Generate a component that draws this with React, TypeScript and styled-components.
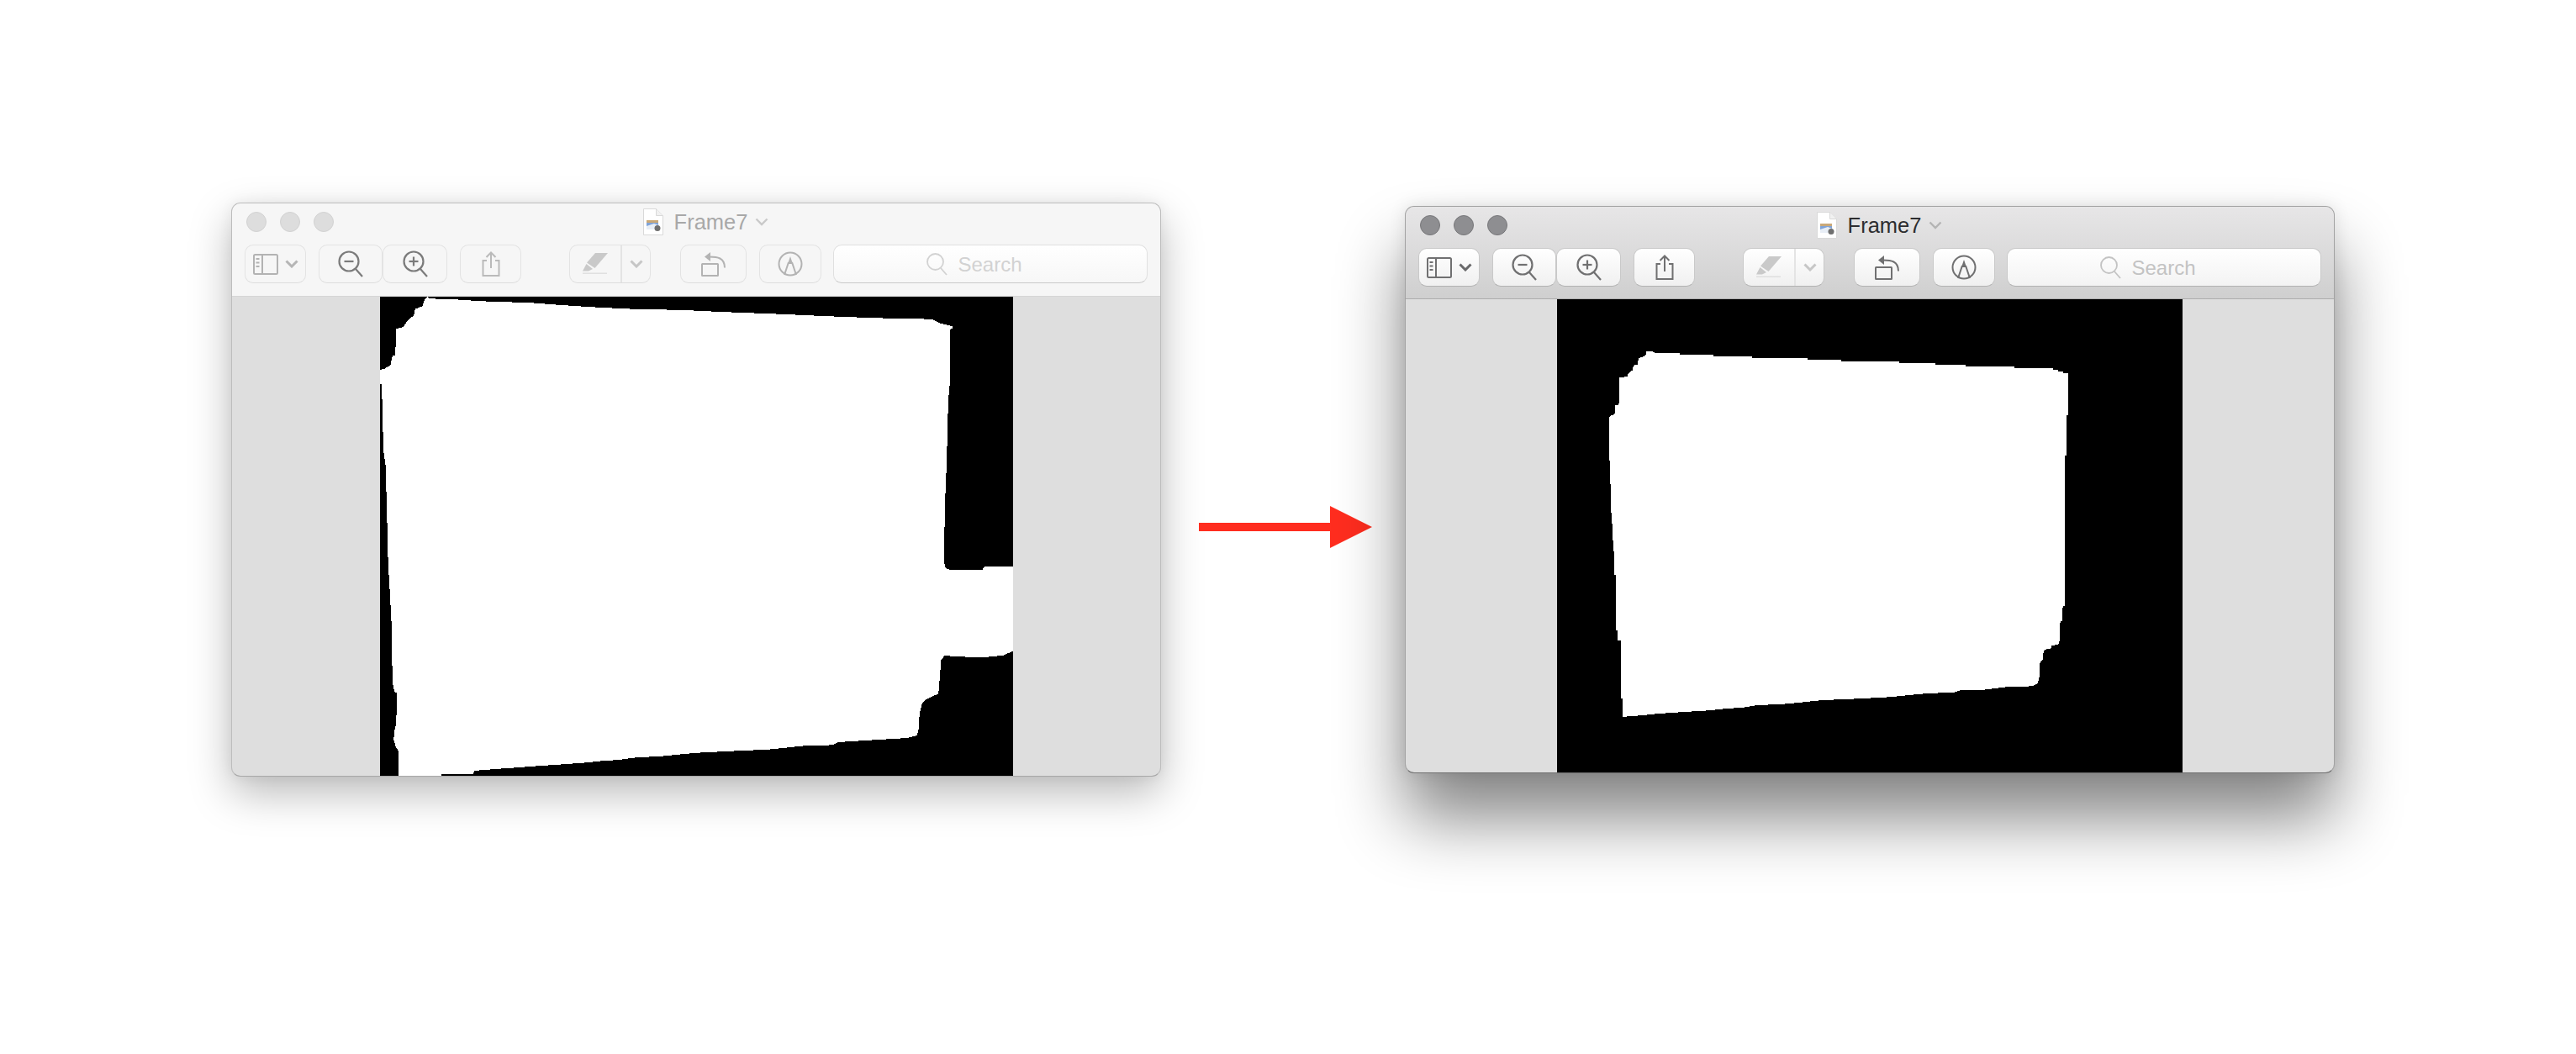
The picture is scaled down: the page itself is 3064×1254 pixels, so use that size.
import React from 'react';
import styled, { createGlobalStyle } from 'styled-components';

const GlobalStyle = createGlobalStyle`
  html, body {
    margin: 0;
    background: #ffffff;
  }
`;

// Mask outlines, read off the reference. Each list is in the coordinates of its viewBox.
const MASK_BEFORE =
  '152,30 155,36 210,38 278,44 392,49 452,55 530,62 620,68 752,72 830,77 968,84 1052,89 1122,93 1238,98 1328,100 1345,112 1375,122 1375,130 1371,130 1370,295 1366,352 1362,555 1358,685 1356,860 1360,878 1372,883 1445,883 1450,873 1517,873 1517,1136 1495,1150 1458,1155 1435,1157 1357,1151 1349,1165 1347,1205 1343,1270 1325,1280 1312,1290 1305,1300 1299,1330 1297,1378 1293,1400 1270,1408 1218,1412 1170,1416 1110,1421 1095,1430 1033,1432 990,1438 945,1444 875,1448 785,1454 748,1458 705,1464 630,1470 600,1476 555,1480 520,1485 458,1491 402,1496 365,1500 310,1505 262,1510 258,1520 185,1522 183,1526 85,1526 84,1448 78,1436 73,1415 74,1390 79,1360 80,1268 74,1262 70,1230 68,1056 64,952 60,862 57,698 54,558 49,510 45,304 41,304 41,258 50,256 65,245 70,215 77,212 78,130 95,125 105,105 120,88 123,68 140,60 145,40';

const MASK_AFTER =
  '232,203 250,205 252,209 310,209 310,213 388,214 388,219 478,220 478,224 608,225 608,229 686,230 686,234 822,235 822,240 906,240 906,245 976,246 976,250 1090,251 1090,256 1180,256 1180,260 1192,262 1192,266 1204,267 1204,271 1215,272 1215,402 1211,402 1211,528 1207,528 1207,997 1203,997 1201,1045 1197,1045 1195,1107 1192,1118 1177,1120 1175,1130 1162,1133 1158,1140 1156,1165 1150,1172 1148,1218 1145,1238 1138,1244 1121,1248 1070,1250 1022,1258 965,1260 950,1266 886,1270 844,1275 800,1281 730,1286 640,1291 605,1296 562,1302 487,1307 460,1313 412,1318 376,1323 314,1328 259,1333 223,1338 176,1343 176,1286 172,1286 172,1106 166,1104 164,1072 162,1072 161,900 157,900 156,794 153,794 152,706 149,706 148,545 145,545 145,408 150,404 158,400 160,372 168,370 170,285 188,282 190,272 200,262 202,248 212,244 214,225 225,220 232,212';

const Page = styled.div`
  box-sizing: border-box;
  display: flex;
  align-items: center;
  width: 3064px;
  height: 1254px;
  padding-left: 275px;
  overflow: hidden;
  background: #ffffff;
`;

const Window = styled.div<{ $active: boolean }>`
  box-sizing: border-box;
  flex: none;
  display: flex;
  flex-direction: column;
  width: 1106px;
  height: ${(p) => (p.$active ? 675 : 683)}px;
  margin-bottom: 89px;
  border: 1px solid ${(p) => (p.$active ? '#a2a2a2' : '#bdbdbd')};
  border-bottom-color: ${(p) => (p.$active ? '#6f6f6f' : '#a8a8a8')};
  border-radius: 11px;
  overflow: hidden;
  background: #dedede;
  box-shadow: ${(p) =>
    p.$active
      ? '0 54px 80px rgba(0, 0, 0, 0.48), 0 0 20px rgba(0, 0, 0, 0.1)'
      : '0 20px 50px rgba(0, 0, 0, 0.27), 0 0 16px rgba(0, 0, 0, 0.06)'};
`;

const Header = styled.header<{ $active: boolean }>`
  box-sizing: border-box;
  flex: none;
  height: ${(p) => (p.$active ? 110 : 111)}px;
  padding: 0 15px;
  border-bottom: 1px solid ${(p) => (p.$active ? '#adadad' : '#d6d6d6')};
  background: ${(p) =>
    p.$active ? 'linear-gradient(#e7e6e7, #cfcfcf)' : '#f6f6f6'};
`;

const TitleRow = styled.div`
  display: grid;
  grid-template-columns: 1fr auto 1fr;
  align-items: center;
  height: 44px;
  margin-bottom: 5px;
`;

const Lights = styled.div`
  display: flex;
  gap: 16px;
  padding-left: 2px;
`;

const Light = styled.span<{ $active: boolean }>`
  box-sizing: border-box;
  width: 24px;
  height: 24px;
  border-radius: 50%;
  border: 1px solid ${(p) => (p.$active ? '#77777a' : '#d2d2d2')};
  background: ${(p) => (p.$active ? '#8e8e91' : '#dddddd')};
`;

const Title = styled.div`
  display: flex;
  align-items: center;
  gap: 13px;
  padding-left: 23px;
`;

const TitleChevron = styled.span`
  display: flex;
  margin-left: -4px;
`;

const TitleText = styled.span<{ $active: boolean }>`
  font-family: 'Liberation Sans', Arial, sans-serif;
  font-size: 25.5px;
  line-height: 32px;
  color: ${(p) => (p.$active ? '#2d2d2f' : '#a8a8a8')};
`;

const Toolbar = styled.div`
  display: flex;
  align-items: stretch;
  height: 46px;
`;

const Joined = styled.div<{ $gap: number }>`
  display: flex;
  margin-left: ${(p) => p.$gap}px;
`;

const ToolButton = styled.div<{ $active: boolean; $width: number; $gap?: number; $tone: string }>`
  box-sizing: border-box;
  flex: none;
  display: flex;
  align-items: center;
  justify-content: center;
  gap: 8px;
  width: ${(p) => p.$width}px;
  margin-left: ${(p) => p.$gap ?? 0}px;
  border: 1px solid ${(p) => (p.$active ? '#c9c9c9' : '#e3e3e3')};
  border-bottom-color: ${(p) => (p.$active ? '#b2b2b2' : '#dddddd')};
  border-radius: 10px;
  color: ${(p) => p.$tone};
  background: ${(p) => (p.$active ? 'linear-gradient(#ffffff, #f0f0f0)' : '#f6f6f6')};
`;

const SplitButton = styled(ToolButton)`
  gap: 0;
  justify-content: flex-start;
`;

const SplitMain = styled.div`
  display: flex;
  align-items: center;
  justify-content: center;
  width: 60px;
  height: 100%;
`;

const SplitArrow = styled.div`
  flex: 1;
  display: flex;
  align-items: center;
  justify-content: center;
  height: 100%;
  border-left: 2px solid #e4e4e4;
`;

const SearchField = styled.div<{ $active: boolean }>`
  box-sizing: border-box;
  flex: none;
  display: flex;
  align-items: center;
  justify-content: center;
  gap: 12px;
  width: 374px;
  margin-left: 14px;
  padding-right: 38px;
  border: 1px solid ${(p) => (p.$active ? '#c9c9c9' : '#e0e0e0')};
  border-bottom-color: ${(p) => (p.$active ? '#b2b2b2' : '#c9c9c9')};
  border-radius: 10px;
  color: ${(p) => (p.$active ? '#c3c3c3' : '#d2d2d2')};
  background: ${(p) =>
    p.$active ? 'linear-gradient(#ffffff, #f3f3f3)' : 'linear-gradient(#ffffff, #f7f7f7)'};
`;

const SearchLabel = styled.span`
  font-family: 'Liberation Sans', Arial, sans-serif;
  font-size: 24px;
  line-height: 30px;
  padding-top: 2px;
`;

const Content = styled.div`
  flex: 1;
  display: flex;
  justify-content: center;
  min-height: 0;
`;

const Picture = styled.svg<{ $width: number }>`
  display: block;
  width: ${(p) => p.$width}px;
  height: 100%;
  background: #000000;
  shape-rendering: crispEdges;
`;

const Arrow = styled.svg`
  flex: none;
  width: 206px;
  height: 50px;
  margin: 0 39px 0 45px;
`;

const Chevron = ({ color, heavy }: { color: string; heavy?: boolean }) => (
  <svg width="16" height="10" viewBox="0 0 16 10" fill="none">
    <path d="M1.5 1.5 8 8l6.5-6.5" stroke={color} strokeWidth={heavy ? 3 : 2.4} />
  </svg>
);

const DocIcon = () => (
  <svg width="24" height="32" viewBox="0 0 24 32">
    <path d="M.5.5h15l8 8v23H.5z" fill="#ffffff" stroke="#d9d9d9" />
    <path d="M15.5.5v8h8" fill="#f1f1f1" stroke="#d9d9d9" />
    <rect x="4" y="14" width="14" height="11" fill="#7fa3d8" />
    <path d="M4 14h14v3H4z" fill="#c9a878" />
    <path d="M4 21l9-3 5 2v5H4z" fill="#e8eef6" />
    <circle cx="17" cy="23.500" r="3.500" fill="#6f6f6f" />
  </svg>
);

const SidebarIcon = () => (
  <svg width="30" height="25" viewBox="0 0 30 25" fill="none" stroke="currentColor">
    <rect x="1" y="1" width="28" height="23" rx="1.500" strokeWidth="2" />
    <path d="M11 1v23" strokeWidth="2" />
    <path d="M3.500 6h4M3.500 10.500h4M3.500 15h4" strokeWidth="2" />
  </svg>
);

const ZoomIcon = ({ plus }: { plus?: boolean }) => (
  <svg width="30" height="32" viewBox="0 0 30 32" fill="none" stroke="currentColor" strokeWidth="2.200">
    <circle cx="13" cy="13" r="11.500" />
    <path d="M21 22l8 9" />
    <path d="M7.500 13h11" />
    {plus && <path d="M13 7.500v11" />}
  </svg>
);

const ShareIcon = () => (
  <svg width="22" height="30" viewBox="0 0 22 30" fill="none" stroke="currentColor" strokeWidth="2">
    <path d="M6 11H1.500v18h19V11H16" />
    <path d="M11 20V1.500M5.500 7 11 1.500 16.500 7" />
  </svg>
);

const MarkupIcon = () => (
  <svg width="30" height="26" viewBox="0 0 30 26" fill="currentColor">
    <path d="M15 0h15L14.500 18 5 11.500z" />
    <path d="M4.500 13 12 19 7 21.500H0z" />
    <path d="M0 23.500h29v1.500H0z" opacity="0.5" />
  </svg>
);

const RotateIcon = () => (
  <svg width="30" height="30" viewBox="0 0 30 30" fill="none" stroke="currentColor" strokeWidth="2">
    <rect x="1" y="15" width="19" height="14" rx="0.500" />
    <path d="M10 6.500c9 0 18 1 18 13" />
    <path d="M11 1v11L4 6.500z" fill="currentColor" stroke="none" />
  </svg>
);

const AnnotateIcon = () => (
  <svg width="30" height="30" viewBox="0 0 30 30" fill="none" stroke="currentColor" strokeWidth="2">
    <circle cx="15" cy="15" r="13.500" />
    <path d="M8 28 13 13M22 28 17 13" />
    <path d="M15 6l3 9h-6z" fill="currentColor" stroke="none" />
  </svg>
);

const SearchIcon = () => (
  <svg width="25" height="27" viewBox="0 0 25 27" fill="none" stroke="currentColor" strokeWidth="1.800">
    <circle cx="10.500" cy="10.500" r="9.500" />
    <path d="M17 18l7 8" />
  </svg>
);

type ChromeProps = { active: boolean };

// Toolbar and title of one Preview window; the inactive window is washed out.
const Chrome: React.FC<ChromeProps> = ({ active }) => {
  const tone = (muted: string) => (active ? '#707071' : muted);
  return (
    <Header $active={active}>
      <TitleRow>
        <Lights>
          <Light $active={active} />
          <Light $active={active} />
          <Light $active={active} />
        </Lights>
        <Title>
          <DocIcon />
          <TitleText $active={active}>Frame7</TitleText>
          <TitleChevron>
            <Chevron color={active ? '#b4b4b4' : '#c9c9c9'} />
          </TitleChevron>
        </Title>
        <span />
      </TitleRow>
      <Toolbar>
        <ToolButton $active={active} $width={73} $tone={tone('#b3b3b3')}>
          <SidebarIcon />
          <Chevron color={active ? '#69696a' : '#b5b5b5'} heavy />
        </ToolButton>
        <Joined $gap={15}>
          <ToolButton $active={active} $width={76} $tone={tone('#7b7b7b')}>
            <ZoomIcon />
          </ToolButton>
          <ToolButton $active={active} $width={77} $tone={tone('#7b7b7b')}>
            <ZoomIcon plus />
          </ToolButton>
        </Joined>
        <ToolButton $active={active} $width={73} $gap={15} $tone={tone('#bababa')}>
          <ShareIcon />
        </ToolButton>
        <SplitButton $active={active} $width={97} $gap={57} $tone="#c9c9c9">
          <SplitMain>
            <MarkupIcon />
          </SplitMain>
          <SplitArrow>
            <Chevron color="#c6c6c6" heavy />
          </SplitArrow>
        </SplitButton>
        <ToolButton $active={active} $width={79} $gap={35} $tone={tone('#b3b3b3')}>
          <RotateIcon />
        </ToolButton>
        <ToolButton $active={active} $width={74} $gap={15} $tone={tone('#b3b3b3')}>
          <AnnotateIcon />
        </ToolButton>
        <SearchField $active={active}>
          <SearchIcon />
          <SearchLabel>Search</SearchLabel>
        </SearchField>
      </Toolbar>
    </Header>
  );
};

const App: React.FC = () => {
  return (
    <Page>
      <GlobalStyle />
      <Window $active={false}>
        <Chrome active={false} />
        <Content>
          <Picture $width={753} viewBox="41 30 1476 1496" preserveAspectRatio="none">
            <polygon points={MASK_BEFORE} fill="#ffffff" />
          </Picture>
        </Content>
      </Window>
      <Arrow viewBox="0 0 206 50">
        <path d="M0 20h156V0l50 25-50 25V30H0z" fill="#ff2d1f" />
      </Arrow>
      <Window $active>
        <Chrome active />
        <Content>
          <Picture $width={744} viewBox="24 41 1458 1475" preserveAspectRatio="none">
            <polygon points={MASK_AFTER} fill="#ffffff" />
          </Picture>
        </Content>
      </Window>
    </Page>
  );
};

export default App;
